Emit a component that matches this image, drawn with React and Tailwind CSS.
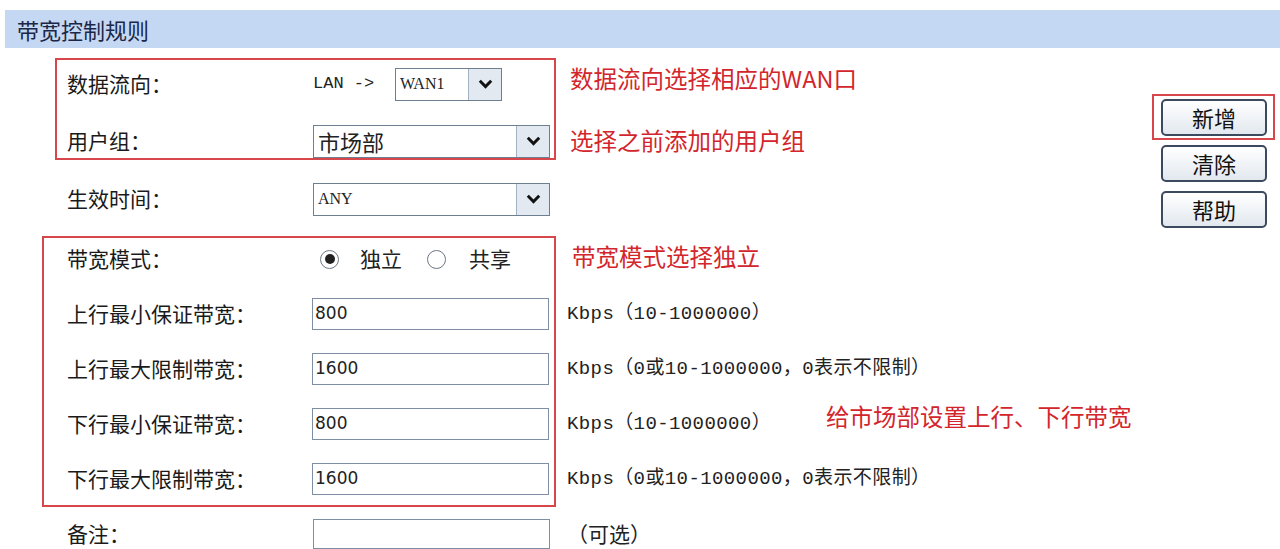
import React from "react";

const CJK = "font-['Noto_Sans_CJK_SC',sans-serif]";
const MONO = "font-['Liberation_Mono','Noto_Sans_CJK_SC',monospace]";

const Chevron = () => (
  <svg width="15" height="10" viewBox="0 0 15 10">
    <path d="M1.8 1.8 L7.5 7.6 L13.2 1.8" fill="none" stroke="#111" strokeWidth="2.9" />
  </svg>
);

const Select = ({ value, width, textClass }) => (
  <div className={`flex h-[33px] border border-[#6f7f92] bg-white ${width}`}>
    <div className={`flex flex-1 items-center pl-[4px] text-[#222] ${textClass}`}>{value}</div>
    <div className="flex w-[33px] items-center justify-center border-l border-[#a3b0bf] bg-[#e3e9f0]">
      <Chevron />
    </div>
  </div>
);

const Input = ({ value, width = "w-[237px]", height = "h-[32px]" }) => (
  <div
    className={`flex items-center border border-[#7f8fa3] bg-white pl-[2px] text-[17px] text-[#222] font-['DejaVu_Sans',sans-serif] ${width} ${height}`}
  >
    {value}
  </div>
);

const Radio = ({ checked }) => (
  <div className="flex h-[19px] w-[19px] items-center justify-center rounded-full border border-[#6d7785] bg-white">
    {checked && <div className="h-[10px] w-[10px] rounded-full bg-[#222]"></div>}
  </div>
);

const Label = ({ children, w = "w-[246px]" }) => (
  <div className={`text-[21px] text-[#1a1a1a] ${w}`}>{children}</div>
);

const Note = ({ children, className = "" }) => (
  <div className={`text-[23.5px] leading-[26px] text-[#d3262c] ${className}`}>{children}</div>
);

const Button = ({ children }) => (
  <button className="flex h-[37px] w-[106px] items-center justify-center rounded-[5px] border-2 border-[#3b4a5e] bg-linear-to-b from-white to-[#e2e8ef] text-[22px] text-[#111]">
    {children}
  </button>
);

const rates = [
  { label: "上行最小保证带宽：", value: "800", unit: "Kbps（10-1000000）" },
  { label: "上行最大限制带宽：", value: "1600", unit: "Kbps（0或10-1000000，0表示不限制）" },
  { label: "下行最小保证带宽：", value: "800", unit: "Kbps（10-1000000）" },
  { label: "下行最大限制带宽：", value: "1600", unit: "Kbps（0或10-1000000，0表示不限制）" },
];

export default function App() {
  return (
    <div className={`h-[549px] w-[1280px] overflow-hidden bg-white pt-[10px] ${CJK}`}>
      <div className="ml-[5px] flex h-[38px] items-center bg-[#c5d8f3] pl-[12px] text-[22px] text-[#1a2748]">
        带宽控制规则
      </div>

      <div className="flex">
        <div className="flex flex-col">
          {/* data direction + user group */}
          <div className="mt-[10px] flex">
            <div className="ml-[55px] flex h-[102px] w-[501px] flex-col gap-[23px] border-2 border-[#d6464b] pl-[10px] pt-[7px]">
              <div className="flex h-[34px] items-center">
                <Label>数据流向：</Label>
                <span className={`w-[82px] text-[17px] text-[#222] ${MONO}`}>LAN -&gt;</span>
                <Select value="WAN1" width="w-[107px]" textClass="text-[16px] font-['Liberation_Serif',serif]" />
              </div>
              <div className="flex h-[34px] items-center">
                <Label>用户组：</Label>
                <Select value="市场部" width="w-[237px]" textClass="text-[22px]" />
              </div>
            </div>
            <div className="ml-[14px] flex flex-col">
              <Note className="mt-[7px]">数据流向选择相应的WAN口</Note>
              <Note className="mt-[36px]">选择之前添加的用户组</Note>
            </div>
          </div>

          {/* time */}
          <div className="mt-[23px] flex h-[32px] items-center pl-[67px]">
            <Label>生效时间：</Label>
            <Select value="ANY" width="w-[237px]" textClass="text-[16px] font-['Liberation_Serif',serif]" />
          </div>

          {/* bandwidth */}
          <div className="mt-[21px] flex">
            <div className="ml-[42px] flex h-[271px] w-[514px] flex-col gap-[23px] border-2 border-[#d6464b] pl-[23px] pt-[5px]">
              <div className="flex h-[32px] items-center">
                <Label w="w-[245px]">带宽模式：</Label>
                <div className="ml-[8px] flex items-center text-[21px] text-[#222]">
                  <Radio checked />
                  <span className="ml-[21px]">独立</span>
                  <div className="ml-[25px]">
                    <Radio />
                  </div>
                  <span className="ml-[23px]">共享</span>
                </div>
              </div>
              {rates.map((r, i) => (
                <div key={i} className="flex h-[32px] items-center">
                  <Label w="w-[245px]">{r.label}</Label>
                  <Input value={r.value} />
                </div>
              ))}
            </div>
            <div className="ml-[11px] flex flex-col gap-[23px] pt-[7px]">
              <div className="flex h-[32px] items-start">
                <Note className="ml-[5px] leading-[20px]">带宽模式选择独立</Note>
              </div>
              {rates.map((r, i) => (
                <div key={i} className="flex h-[32px] items-center">
                  <span
                    className={`text-[19px] tracking-[0.4px] text-[#222] ${MONO} ${i === 2 ? "w-[259px]" : ""}`}
                  >
                    {r.unit}
                  </span>
                  {i === 2 && <Note className="mb-[16px]">给市场部设置上行、下行带宽</Note>}
                </div>
              ))}
            </div>
          </div>

          {/* remark */}
          <div className="mt-[12px] flex h-[30px] items-center pl-[67px]">
            <Label>备注：</Label>
            <Input value="" height="h-[30px]" />
            <span className="ml-[17px] text-[21px] text-[#222]">（可选）</span>
          </div>
        </div>

        {/* buttons */}
        <div className="ml-auto mr-[5px] mt-[46px] flex flex-col">
          <div className="border-2 border-[#d6464b] pb-[2px] pl-[7px] pr-[6px] pt-[3px]">
            <Button>新增</Button>
          </div>
          <div className="ml-[9px] mt-[5px] flex flex-col gap-[9px]">
            <Button>清除</Button>
            <Button>帮助</Button>
          </div>
        </div>
      </div>
    </div>
  );
}
